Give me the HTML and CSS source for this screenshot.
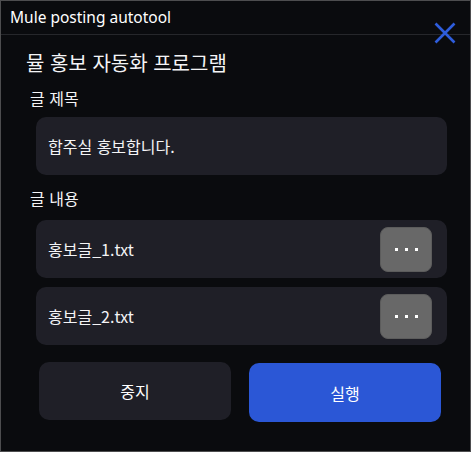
FILE: index.html
```html
<!DOCTYPE html>
<html lang="ko">
<head>
<meta charset="utf-8">
<title>Mule posting autotool</title>
<link rel="stylesheet" href="styles.css">
</head>
<body>
<div class="window">
  <div class="titlebar">Mule posting autotool</div>
  <svg class="close" width="22" height="22" viewBox="0 0 22 22" aria-hidden="true">
    <path d="M1.5 1.5 L20.5 20.5 M20.5 1.5 L1.5 20.5" stroke="#2e5ddc" stroke-width="2.6" fill="none"/>
  </svg>
  <main class="content">
    <h1 class="heading">뮬 홍보 자동화 프로그램</h1>
    <div class="label">글 제목</div>
    <div class="field">합주실 홍보합니다.</div>
    <div class="label label-body">글 내용</div>
    <div class="files">
      <div class="file-row">
        <span class="file-name">홍보글_1.txt</span>
        <button class="browse" type="button"><i></i><i></i><i></i></button>
      </div>
      <div class="file-row">
        <span class="file-name">홍보글_2.txt</span>
        <button class="browse" type="button"><i></i><i></i><i></i></button>
      </div>
    </div>
    <div class="actions">
      <button class="btn btn-stop" type="button">중지</button>
      <button class="btn btn-run" type="button">실행</button>
    </div>
  </main>
</div>
</body>
</html>
```

FILE: styles.css
```css
* { box-sizing: border-box; }
html, body { margin: 0; padding: 0; background: #0a0b0e; }
body {
  font-family: "Noto Sans", "Noto Sans CJK KR", sans-serif;
  color: #f4f4f6;
}
.window {
  position: relative;
  width: 471px;
  height: 452px;
  border: 1px solid #4d4d4f;
  background: #0a0b0e;
}
.titlebar {
  height: 34px;
  border-bottom: 1px solid #26272b;
  padding-left: 9px;
  font-size: 15.5px;
  line-height: 33px;
  color: #ffffff;
}
.close {
  position: absolute;
  left: 433px;
  top: 21px;
}
.content {
  padding: 0 23px 0 25px;
  font-family: "Noto Sans CJK KR", "Noto Sans", sans-serif;
}
.heading {
  margin: 14px 0 0 0;
  font-size: 20px;
  font-weight: 400;
  line-height: 28px;
}
.label {
  margin: 10px 0 0 4px;
  font-size: 16px;
  line-height: 22px;
}
.label-body { margin-top: 12px; }
.field {
  margin: 8px 0 0 10px;
  height: 58px;
  border-radius: 10px;
  background: #1f1f27;
  padding-left: 12px;
  font-size: 16px;
  line-height: 58px;
}
.files {
  margin: 11px 0 0 10px;
  display: flex;
  flex-direction: column;
  gap: 9px;
}
.file-row {
  height: 58px;
  border-radius: 10px;
  background: #1f1f27;
  display: flex;
  align-items: center;
  justify-content: space-between;
  padding: 0 15px 0 12px;
  font-size: 16px;
}
.browse {
  width: 52px;
  height: 45px;
  border: 1px solid #5c5c5c;
  border-radius: 8px;
  background: #686868;
  display: flex;
  align-items: center;
  justify-content: center;
  gap: 7px;
  padding: 0;
}
.browse i {
  display: block;
  width: 3px;
  height: 3px;
  background: #ffffff;
}
.actions {
  margin: 17px 0 0 13px;
  display: flex;
  gap: 18px;
  align-items: flex-start;
}
.btn {
  width: 192px;
  height: 58px;
  border: none;
  border-radius: 10px;
  font-family: "Noto Sans CJK KR", "Noto Sans", sans-serif;
  font-size: 16px;
  color: #ffffff;
  padding: 0;
}
.btn-stop { background: #1f1f27; }
.btn-run {
  background: #2b57d6;
  height: 59px;
  margin-top: 1px;
}
```
